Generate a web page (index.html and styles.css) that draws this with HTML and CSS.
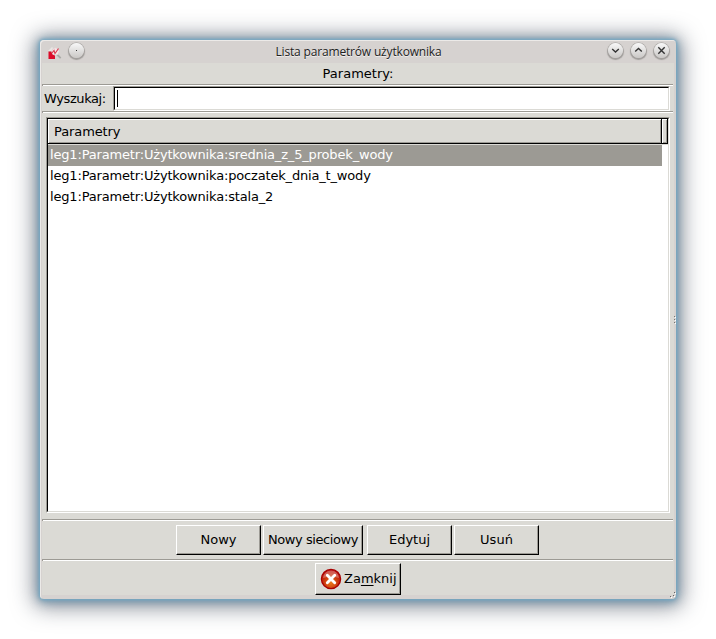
FILE: index.html
```html
<!DOCTYPE html>
<html lang="pl">
<head>
<meta charset="utf-8">
<title>Lista parametrów użytkownika</title>
<link rel="stylesheet" href="styles.css">
</head>
<body>
<main class="window">
  <header class="titlebar">
    <svg class="app-icon" width="16" height="16" viewBox="0 0 16 16">
      <path d="M1 6l4-4 4 4z" fill="#e9e6e4"/>
      <path d="M1.500 6.500H6l2 2v5.500H1.500z" fill="#dc0a28"/>
      <path d="M9.500 9l4.200 4.200" stroke="#aaa9a6" stroke-width="1.800"/>
      <circle cx="8.500" cy="6.500" r="3.700" fill="#f5e6e8" stroke="#d9cfce" stroke-width=".8"/>
      <path d="M5 8l2-2.500 1 3 3.500-5" fill="none" stroke="#dc3c50" stroke-width="1.200"/>
    </svg>
    <span class="round"><svg width="15" height="15" viewBox="0 0 15 15"><rect class="dot" x="7" y="7" width="1" height="1"/></svg></span>
    <h1 class="title">Lista parametrów użytkownika</h1>
    <span class="round"><svg width="15" height="15" viewBox="0 0 15 15"><path d="M4.200 6l3.300 3 3.300-3"/></svg></span>
    <span class="round"><svg width="15" height="15" viewBox="0 0 15 15"><path d="M4.200 8.500l3.300-3 3.300 3"/></svg></span>
    <span class="round"><svg width="15" height="15" viewBox="0 0 15 15"><path d="M4.300 4.300l6.400 6.400m0-6.400l-6.400 6.400"/></svg></span>
  </header>
  <div class="content">
    <div class="caption">Parametry:</div>
    <div class="rule"></div>
    <div class="search">
      <label class="search-label">Wyszukaj:</label>
      <div class="sunken field"><div class="inner"><i class="caret"></i></div></div>
    </div>
    <div class="rule"></div>
    <div class="sunken list"><div class="inner">
      <div class="head"><div class="cell name">Parametry</div><div class="cell rest"></div></div>
      <div class="row selected">leg1:Parametr:Użytkownika:srednia_z_5_probek_wody</div>
      <div class="row">leg1:Parametr:Użytkownika:poczatek_dnia_t_wody</div>
      <div class="row">leg1:Parametr:Użytkownika:stala_2</div>
    </div></div>
    <div class="rule"></div>
    <div class="actions">
      <div class="btn">Nowy</div>
      <div class="btn wide">Nowy sieciowy</div>
      <div class="btn">Edytuj</div>
      <div class="btn">Usuń</div>
    </div>
    <div class="rule"></div>
    <div class="footer">
      <div class="btn close">
        <svg width="22" height="22" viewBox="0 0 22 22">
          <defs><radialGradient id="red" cx=".5" cy=".7" r=".65"><stop offset="0" stop-color="#e87818"/><stop offset=".55" stop-color="#cc3a10"/><stop offset="1" stop-color="#b80808"/></radialGradient></defs>
          <circle cx="11" cy="11" r="9.600" fill="url(#red)" stroke="#a80000" stroke-width="1.300"/>
          <path d="M3 10a8 7.500 0 0 1 16 0q-8-3-16 0z" fill="#fff" opacity=".3"/>
          <path d="M7.300 7.300l7.400 7.400m0-7.400l-7.400 7.400" stroke="#fff" stroke-width="2.900" stroke-linecap="round"/>
        </svg>
        <span>Za<u>m</u>knij</span>
      </div>
    </div>
  </div>
  <svg class="grip" width="4" height="10" viewBox="0 0 4 10"><path d="M2 1.500h1M2 4.500h1M2 7.500h1" stroke="#77756f"/><path d="M3 2.500h1M3 5.500h1M3 8.500h1" stroke="#fff"/></svg>
  <svg class="corner" width="8" height="8" viewBox="0 0 8 8"><path d="M6 1.500h1M5 4.500h1M2 5.500h1" stroke="#666"/><path d="M7 2.500h1M6 5.500h1M3 6.500h1" stroke="#fff"/></svg>
</main>
</body>
</html>
```
FILE: styles.css
```css
* { box-sizing: border-box; }
body {
  margin: 0;
  padding: 40px;
  height: 639px;
  overflow: hidden;
  background: #fff;
  color: #000;
  font: 13px "DejaVu Sans", sans-serif;
}
.window {
  position: relative;
  width: 636px;
  height: 559px;
  padding: 0 2px 4px;
  border-radius: 4px;
  background: #d6d2d0;
  box-shadow:
    inset 1px 1px 0 #eceae8,
    0 0 3px 1px #74a9c5,
    0 1px 9px 2px rgba(90, 140, 170, .7),
    0 2px 22px 6px rgba(40, 50, 65, .55);
}
.titlebar {
  display: flex;
  height: 23px;
  padding: 3px 5px 0 5px;
}
.app-icon { margin: 2px 6px 0 0; }
.round {
  width: 15px;
  height: 15px;
  border-radius: 50%;
  background: linear-gradient(#f8f8f8, #cac8c6);
  box-shadow: 0 0 0 .5px #a5a29f, 0 1px 1px 1px #a09d9b;
}
.round + .round { margin-left: 8px; }
.round svg {
  display: block;
  fill: none;
  stroke: #333;
  stroke-width: 1.4;
}
.round .dot {
  fill: #333;
  stroke: none;
}
.title {
  flex: 1;
  margin: 0;
  padding-left: 25px;
  text-align: center;
  color: #222;
  font: 12px/17px "Open Sans", sans-serif;
  letter-spacing: -.17px;
  text-shadow: 0 1px #f0eeee;
}
.content {
  height: 532px;
  background: #dbdad5;
}
.caption {
  height: 21px;
  line-height: 21px;
  text-align: center;
}
.rule {
  width: 631px;
  height: 2px;
  border-top: 1px solid #9c9a94;
  border-left: 1px solid #9c9a94;
  background: #fff;
}
.search {
  display: flex;
  height: 25px;
}
.search-label {
  width: 71px;
  padding-left: 2px;
  line-height: 25px;
  letter-spacing: -.4px;
}
.sunken {
  border: 1px solid;
  border-color: #9c9a94 #fff #fff #9c9a94;
}
.inner {
  height: 100%;
  border: 1px solid;
  border-color: #000 #dbdad5 #dbdad5 #000;
  background: #fff;
}
.field { width: 557px; }
.caret {
  display: block;
  width: 1px;
  height: 17px;
  margin: 2px 0 0 2px;
  background: #000;
}
.list {
  width: 624px;
  height: 396px;
  margin: 4px 0 6px 4px;
}
.head {
  display: flex;
  height: 26px;
  border-bottom: 1px solid #dbdad5;
}
.cell {
  height: 25px;
  border-right: 1px solid #000;
  border-bottom: 1px solid #000;
  background: #dbdad5;
  box-shadow: inset 1px 1px #fff, inset -1px -1px #9c9a94;
}
.name {
  width: 614px;
  padding-left: 6px;
  line-height: 26px;
  letter-spacing: -.1px;
}
.rest { width: 6px; }
.row {
  width: 614px;
  height: 21px;
  padding-left: 2px;
  line-height: 19px;
  letter-spacing: -.17px;
  white-space: nowrap;
}
.selected {
  background: #9c9a94;
  color: #fff;
}
.actions {
  display: flex;
  gap: 2px;
  height: 38px;
  padding: 4px 0 0 134px;
}
.btn {
  width: 85px;
  height: 30px;
  border: 1px solid;
  border-color: #fff #000 #000 #fff;
  box-shadow: inset -1px -1px #9c9a94;
  text-align: center;
  line-height: 28px;
  white-space: nowrap;
}
.wide {
  width: 100px;
  margin-right: 2px;
  letter-spacing: -.42px;
}
.footer { padding: 2px 0 0 273px; }
.close {
  display: flex;
  align-items: center;
  width: 86px;
  height: 32px;
  padding-left: 4px;
  gap: 2px;
}
.close u {
  text-decoration-thickness: 1px;
  text-underline-offset: 2px;
}
.grip {
  position: absolute;
  right: 0;
  top: 275px;
}
.corner {
  position: absolute;
  right: 0;
  bottom: 0;
}
```
